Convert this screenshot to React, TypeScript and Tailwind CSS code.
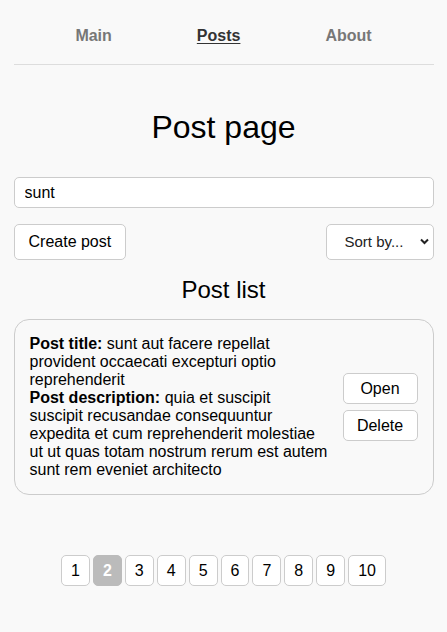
import { useState } from 'react';

interface Post {
  id: number;
  title: string;
  body: string;
}

const pages = [1, 2, 3, 4, 5, 6, 7, 8, 9, 10];

export default function App() {
  const [query, setQuery] = useState('sunt');
  const [page, setPage] = useState(2);
  const [posts] = useState<Post[]>([
    {
      id: 1,
      title: 'sunt aut facere repellat provident occaecati excepturi optio reprehenderit',
      body: 'quia et suscipit suscipit recusandae consequuntur expedita et cum reprehenderit molestiae ut ut quas totam nostrum rerum est autem sunt rem eveniet architecto',
    },
  ]);

  return (
    <div className="min-h-screen bg-[#f9f9f9] font-['Liberation_Sans',Arial,sans-serif] text-[16px] leading-[18px] text-black">
      <div className="mx-auto w-[420px]">
        {/* Navbar */}
        <nav className="flex justify-center gap-[85px] border-b border-[#dddddd] pt-[27px] pb-[19px] font-bold">
          <a className="text-[#777777]">Main</a>
          <a className="text-[#333333] underline underline-offset-2">Posts</a>
          <a className="text-[#777777]">About</a>
        </nav>

        <h1 className="mt-[44px] text-center text-[32px] leading-[37px]">Post page</h1>

        <input
          value={query}
          onChange={(e) => setQuery(e.target.value)}
          className="mt-[31px] block h-[31px] w-full rounded-[5px] border border-[#cccccc] bg-white px-[10px] outline-none"
        />

        {/* Controls */}
        <div className="mt-[16px] flex items-center justify-between">
          <button className="h-[36px] rounded-[5px] border border-[#cccccc] bg-white px-[14px]">
            Create post
          </button>
          <div className="relative">
            <select
              defaultValue=""
              className="h-[36px] w-[108px] appearance-none rounded-[5px] border border-[#cccccc] bg-white pl-[18px] text-[15px] text-[#222222] outline-none"
            >
              <option value="" disabled>
                Sort by...
              </option>
              <option value="title">By title</option>
              <option value="body">By description</option>
            </select>
            <svg
              className="pointer-events-none absolute top-[14px] right-[5px]"
              width="9"
              height="7"
              viewBox="0 0 9 7"
            >
              <path d="M1 1.5 L4.5 5 L8 1.5" fill="none" stroke="#222" strokeWidth="2" />
            </svg>
          </div>
        </div>

        <h2 className="mt-[16px] text-center text-[24px] leading-[28px]">Post list</h2>

        {/* Posts */}
        <div className="mt-[15px]">
          {posts.map((post) => (
            <div
              key={post.id}
              className="flex items-center justify-between rounded-[15px] border border-[#cccccc] px-[15px] py-[15px]"
            >
              <div className="w-[298px]">
                <div>
                  <b>Post title:</b> {post.title}
                </div>
                <div>
                  <b>Post description:</b> {post.body}
                </div>
              </div>
              <div className="flex w-[75px] flex-col gap-[6px]">
                <button className="h-[31px] rounded-[5px] border border-[#cccccc] bg-white">Open</button>
                <button className="h-[31px] rounded-[5px] border border-[#cccccc] bg-white">Delete</button>
              </div>
            </div>
          ))}
        </div>

        {/* Pagination */}
        <div className="mt-[60px] flex justify-center gap-[3px]">
          {pages.map((p) => (
            <button
              key={p}
              onClick={() => setPage(p)}
              className={
                p === page
                  ? 'h-[31px] rounded-[5px] border border-[#bbbbbb] bg-[#bbbbbb] px-[9px] font-bold text-white'
                  : 'h-[31px] rounded-[5px] border border-[#cccccc] bg-white px-[9px]'
              }
            >
              {p}
            </button>
          ))}
        </div>
      </div>
    </div>
  );
}
